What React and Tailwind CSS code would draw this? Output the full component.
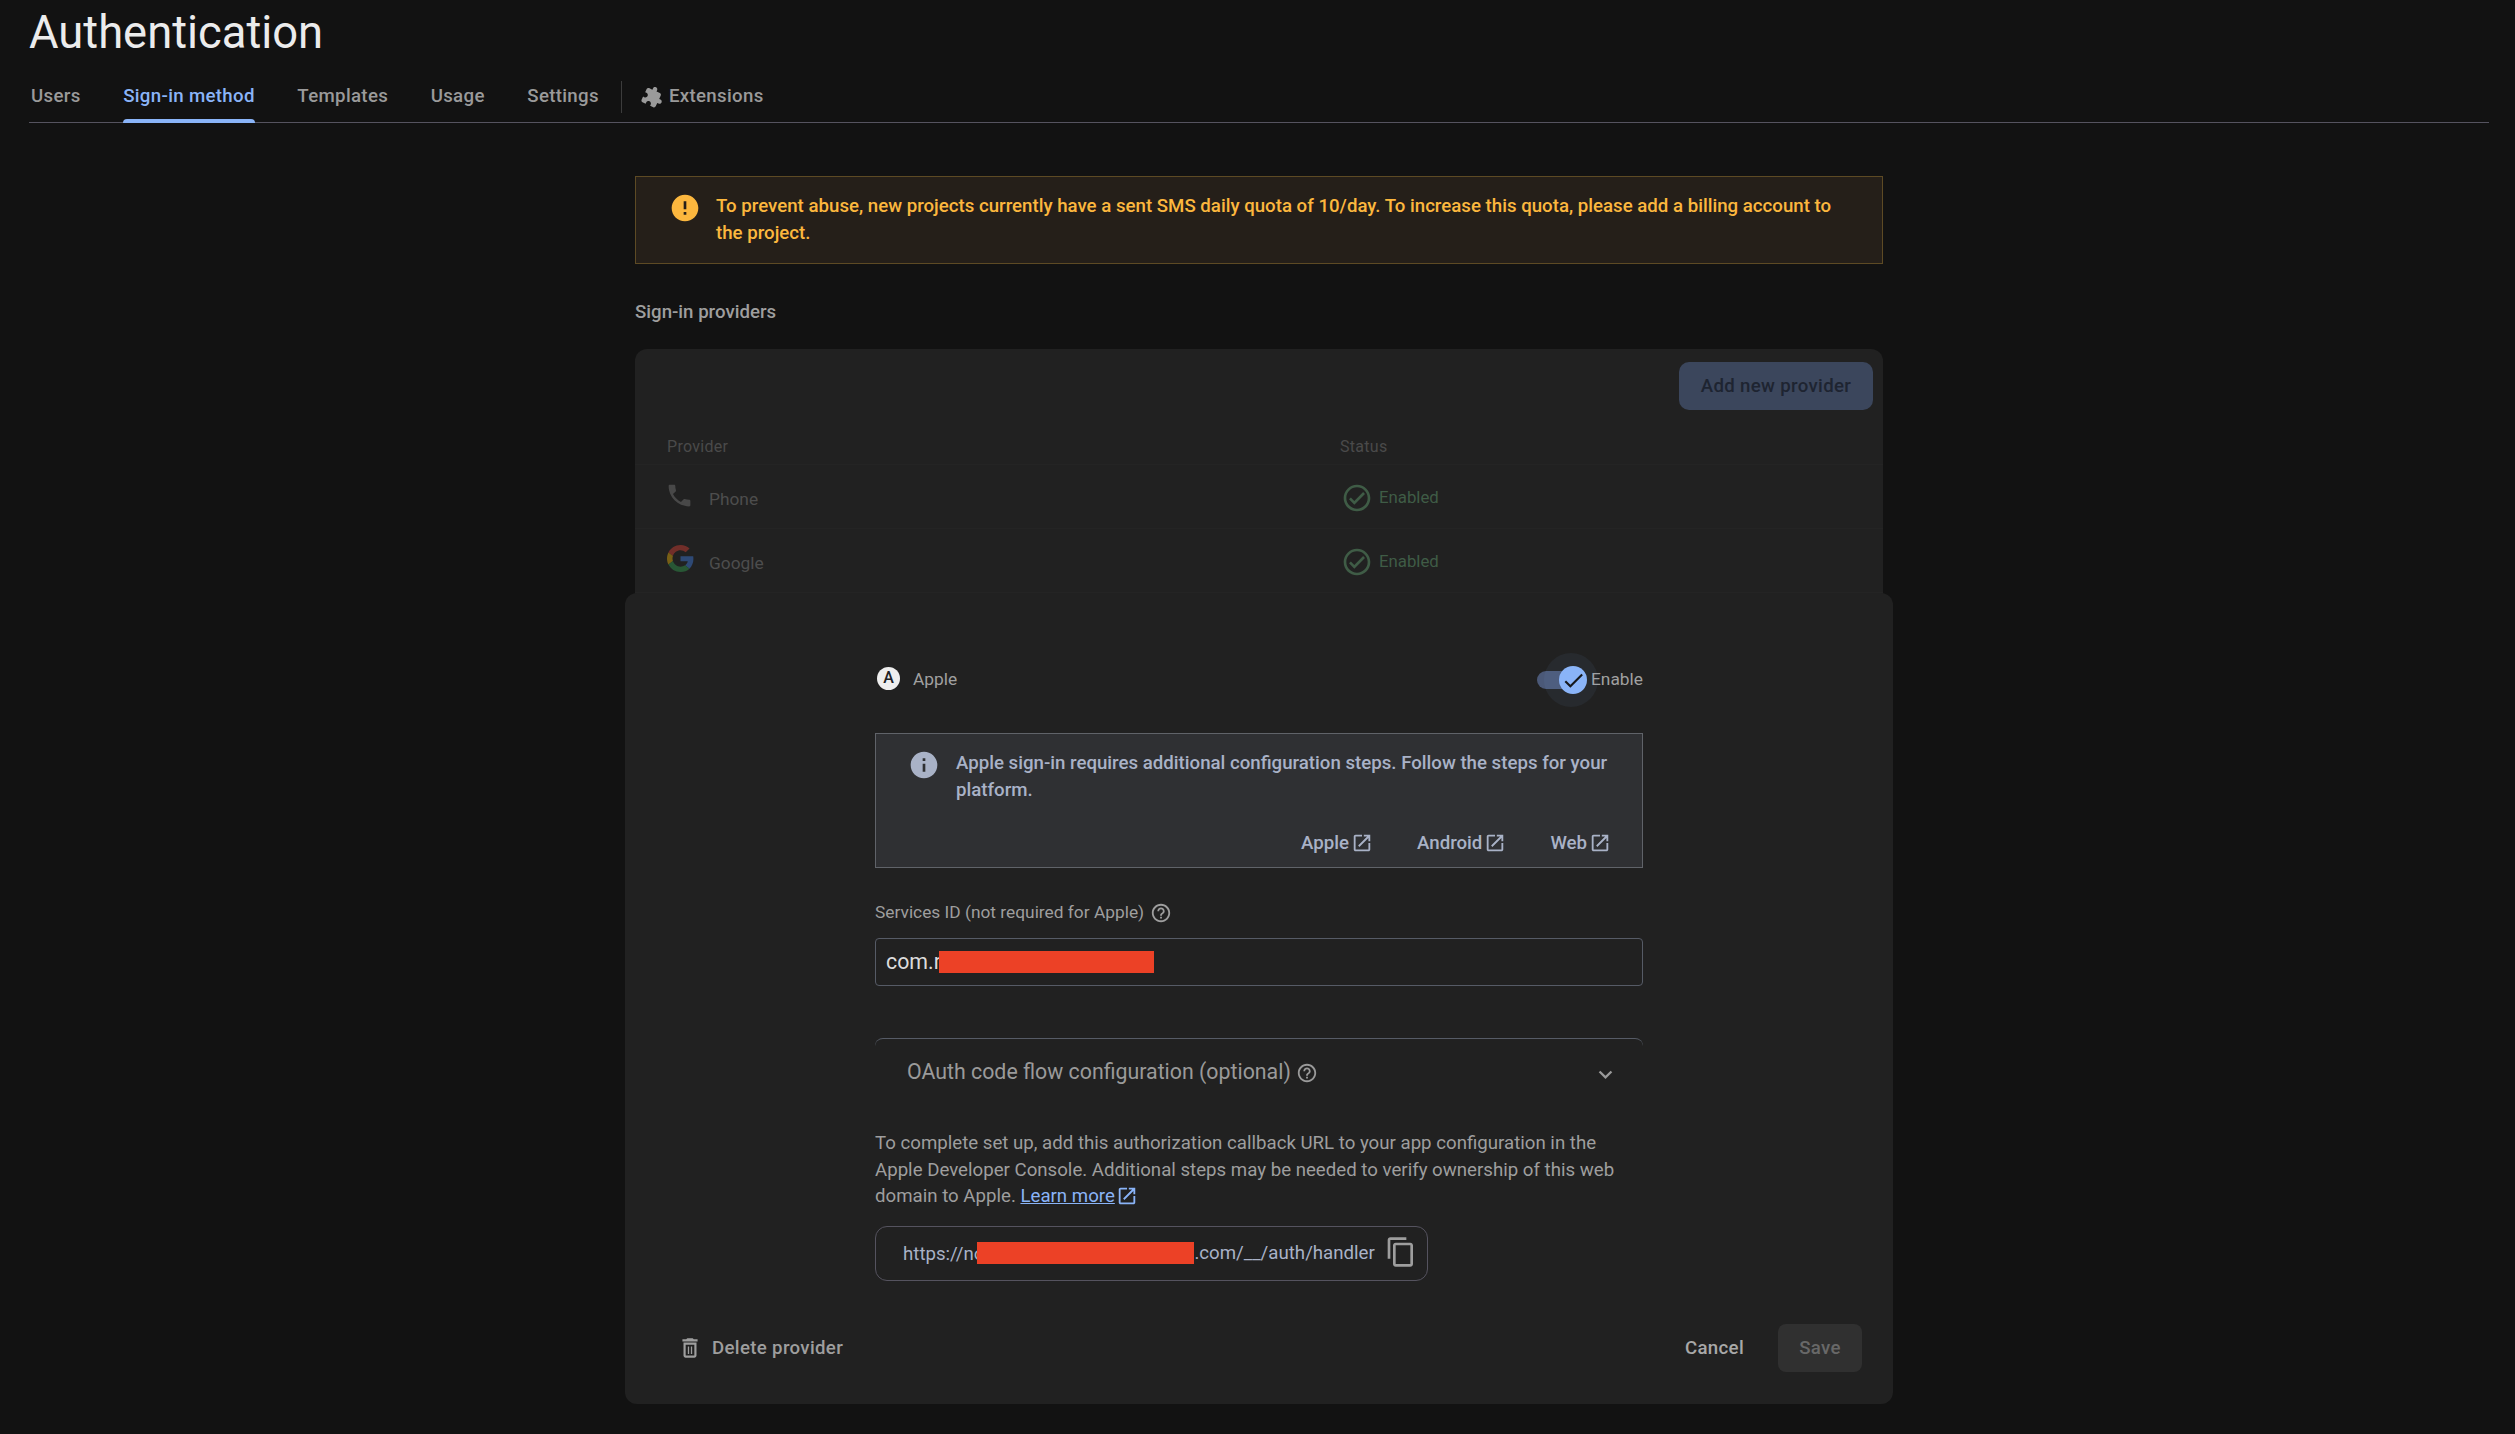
import React from 'react';

const Icon = ({ d, className, children }) => (
    <svg viewBox="0 0 24 24" fill="currentColor" className={className}>
        {d && <path d={d} />}
        {children}
    </svg>
);

const paths = {
    checkCircle: "M12 2C6.48 2 2 6.48 2 12s4.48 10 10 10 10-4.48 10-10S17.52 2 12 2zm0 18c-4.41 0-8-3.59-8-8s3.59-8 8-8 8 3.59 8 8-3.59 8-8 8zm4.59-12.42L10 14.17l-2.59-2.58L6 13l4 4 8-8z",
    phone: "M6.62 10.79c1.44 2.83 3.76 5.14 6.59 6.59l2.2-2.2c.27-.27.67-.36 1.02-.24 1.12.37 2.33.57 3.57.57.55 0 1 .45 1 1V20c0 .55-.45 1-1 1-9.39 0-17-7.61-17-17 0-.55.45-1 1-1h3.5c.55 0 1 .45 1 1 0 1.25.2 2.45.57 3.57.11.35.03.74-.25 1.02l-2.2 2.2z",
    openNew: "M19 19H5V5h7V3H5c-1.11 0-2 .9-2 2v14c0 1.1.89 2 2 2h14c1.1 0 2-.9 2-2v-7h-2v7zM14 3v2h3.59l-9.83 9.83 1.41 1.41L19 6.41V10h2V3h-7z",
    help: "M11 18h2v-2h-2v2zm1-16C6.48 2 2 6.48 2 12s4.48 10 10 10 10-4.48 10-10S17.52 2 12 2zm0 18c-4.41 0-8-3.59-8-8s3.59-8 8-8 8 3.59 8 8-3.59 8-8 8zm0-14c-2.21 0-4 1.79-4 4h2c0-1.1.9-2 2-2s2 .9 2 2c0 2-3 1.75-3 5h2c0-2.25 3-2.5 3-5 0-2.21-1.79-4-4-4z",
    copy: "M16 1H4c-1.1 0-2 .9-2 2v14h2V3h12V1zm3 4H8c-1.1 0-2 .9-2 2v14c0 1.1.9 2 2 2h11c1.1 0 2-.9 2-2V7c0-1.1-.9-2-2-2zm0 16H8V7h11v14z",
    expand: "M16.59 8.59L12 13.17 7.41 8.59 6 10l6 6 6-6z",
    info: "M12 2C6.48 2 2 6.48 2 12s4.48 10 10 10 10-4.48 10-10S17.52 2 12 2zm1 15h-2v-6h2v6zm0-8h-2V7h2v2z",
    error: "M12 2C6.48 2 2 6.48 2 12s4.48 10 10 10 10-4.48 10-10S17.52 2 12 2zm1 15h-2v-2h2v2zm0-4h-2V7h2v6z",
    trash: "M6 19c0 1.1.9 2 2 2h8c1.1 0 2-.9 2-2V7H6v12zM8 9h8v10H8V9zm7.5-5l-1-1h-5l-1 1H5v2h14V4h-3.5zM10 10.5h1.2v7H10zM12.8 10.5H14v7h-1.2z",
    check: "M9 16.17L4.83 12l-1.42 1.41L9 19 21 7l-1.41-1.41z",
    extension: "M20.5 11H19V7c0-1.1-.9-2-2-2h-4V3.5C13 2.12 11.88 1 10.5 1S8 2.12 8 3.5V5H4c-1.1 0-1.99.9-1.99 2v3.8H3.5c1.49 0 2.7 1.21 2.7 2.7s-1.21 2.7-2.7 2.7H2V20c0 1.1.9 2 2 2h3.8v-1.5c0-1.49 1.21-2.7 2.7-2.7 1.49 0 2.7 1.21 2.7 2.7V22H17c1.1 0 2-.9 2-2v-4h1.5c1.38 0 2.5-1.12 2.5-2.5S21.88 11 20.5 11z",
};

const GoogleLogo = () => (
    <svg viewBox="0 0 48 48" className="w-[27px] h-[27px] opacity-40 -mt-[3px]">
        <path fill="#EA4335" d="M24 9.5c3.54 0 6.71 1.22 9.21 3.6l6.85-6.85C35.9 2.38 30.47 0 24 0 14.62 0 6.51 5.38 2.56 13.22l7.98 6.19C12.43 13.72 17.74 9.5 24 9.5z" />
        <path fill="#4285F4" d="M46.98 24.55c0-1.57-.15-3.09-.38-4.55H24v9.02h12.94c-.58 2.96-2.26 5.48-4.78 7.18l7.73 6c4.51-4.18 7.09-10.36 7.09-17.65z" />
        <path fill="#FBBC05" d="M10.53 28.59c-.48-1.45-.76-2.99-.76-4.59s.27-3.14.76-4.59l-7.98-6.19C.92 16.46 0 20.12 0 24c0 3.88.92 7.54 2.56 10.78l7.97-6.19z" />
        <path fill="#34A853" d="M24 48c6.48 0 11.93-2.13 15.89-5.81l-7.73-6c-2.15 1.45-4.92 2.3-8.16 2.3-6.26 0-11.57-4.22-13.47-9.91l-7.98 6.19C6.51 42.62 14.62 48 24 48z" />
    </svg>
);

const tabs = ['Users', 'Sign-in method', 'Templates', 'Usage', 'Settings'];

const Tabs = () => (
    <div className="flex items-center h-[52px] mt-[18px] mr-[26px] pl-[2px] border-b border-[#55535f] text-[18.67px] tracking-[0.33px] font-medium text-[#9a9a9a]">
        <div className="flex gap-[42.5px] items-center h-full">
            {tabs.map(t => (
                <div key={t} className={t === 'Sign-in method' ? 'relative h-full flex items-center pb-[2px] text-[#8ab4f8]' : 'h-full flex items-center pb-[2px]'}>
                    {t}
                    {t === 'Sign-in method' && <div className="absolute left-0 right-0 -bottom-px h-1 rounded-t bg-[#8ab4f8]" />}
                </div>
            ))}
        </div>
        <div className="ml-[22px] mr-[20px] w-px h-8 bg-[#3c3c3c]" />
        <Icon d={paths.extension} className="w-[22px] h-[22px] rotate-[25deg] mr-[5px]" />
        <span className="pb-[2px]">Extensions</span>
    </div>
);

const Row = ({ icon, name }) => (
    <div className="grid grid-cols-[673px_1fr] h-[64px] px-8 border-b border-[#242424] items-center">
        <div className="flex items-center gap-[15px] text-[17.33px] text-[#4d4d4d]">
            {icon}
            <span className="pt-[6px]">{name}</span>
        </div>
        <div className="flex items-center gap-[8px] pl-[3px] pt-[2px] text-[16.8px] text-[#3f5c46]">
            <Icon d={paths.checkCircle} className="w-8 h-8 -mx-[2px]" />
            <span>Enabled</span>
        </div>
    </div>
);

const LinkOut = ({ label }) => (
    <div className="flex items-center gap-[2px]">
        {label}
        <Icon d={paths.openNew} className="w-[22px] h-[22px]" />
    </div>
);

const Toggle = () => (
    <div className="relative w-[54px] h-[54px]">
        <div className="absolute left-0 top-[18px] w-[40px] h-[18px] rounded-full bg-[#4b5978]" />
        <div className="absolute left-[7px] top-0 w-[54px] h-[54px] rounded-full bg-[#8ab4f8]/[0.06]" />
        <div className="absolute left-[22px] top-[13px] w-[28px] h-[28px] rounded-full bg-[#8ab4f8] flex items-center justify-center text-[#16181c]">
            <Icon d={paths.check} className="w-[25px] h-[25px]" />
        </div>
    </div>
);

const Redacted = ({ className }) => <span className={className} />;

const Modal = () => (
    <div className="absolute -left-[10px] top-[244px] w-[1268px] h-[811px] rounded-[12px] bg-[#212121] flex flex-col">
        <div className="ml-[250px] w-[768px] pt-[60px]">
            <div className="flex items-center justify-between h-[54px]">
                <div className="flex items-center gap-[13px] text-[17.33px] text-[#a0a0a0]">
                    <div className="ml-[2px] -mt-[3px] w-[23px] h-[23px] rounded-full bg-[#eeeeee] text-[#202124] text-[16px] font-medium flex items-center justify-center">A</div>
                    <span>Apple</span>
                </div>
                <div className="flex items-center text-[17.33px] text-[#a0a0a0]">
                    <Toggle />
                    <span>Enable</span>
                </div>
            </div>

            <div className="mt-[26px] h-[135px] border border-[#606369] bg-[#2f3033] text-[18.67px] font-medium text-[#a9b2c7]">
                <div className="flex pl-[35px] pr-[30px] pt-[16px] gap-[19px] leading-[26.67px]">
                    <Icon d={paths.info} className="shrink-0 w-[32px] h-[32px] -mx-[3px] mt-[-1px]" />
                    <div>Apple sign-in requires additional configuration steps. Follow the steps for your platform.</div>
                </div>
                <div className="flex justify-end gap-[44px] pr-[31px] mt-[28px] leading-[24px]">
                    <LinkOut label="Apple" />
                    <LinkOut label="Android" />
                    <LinkOut label="Web" />
                </div>
            </div>

            <div className="mt-[35px] h-5 flex items-center gap-[6px] text-[17.33px] text-[#9e9e9e]">
                <span>Services ID (not required for Apple)</span>
                <Icon d={paths.help} className="w-[22px] h-[22px]" />
            </div>
            <div className="mt-[15px] h-[48px] border border-[#565b66] rounded-[4px] flex items-center pl-[10px] text-[21.33px] text-[#dcdcdc]">
                <span>com.r</span>
                <Redacted className="-ml-[2px] w-[215px] h-[22px] bg-[#ec4126]" />
            </div>

            <div className="mt-[52px] h-[66px] border-t border-[#565b66] rounded-t-[8px] flex items-center pl-[32px] pr-[24px] text-[21.33px] text-[#9a9a9a]">
                <span>OAuth code flow configuration (optional)</span>
                <Icon d={paths.help} className="ml-[5px] mt-[2px] w-[22px] h-[22px]" />
                <Icon d={paths.expand} className="ml-auto mt-[6px] w-[27px] h-[27px]" />
            </div>

            <p className="mt-[26px] text-[18.67px] leading-[26.67px] text-[#9e9e9e]">
                To complete set up, add this authorization callback URL to your app configuration in the Apple Developer Console. Additional steps may be needed to verify ownership of this web domain to Apple.{' '}
                <span className="text-[#8ab4f8] underline">Learn more</span>
                <Icon d={paths.openNew} className="inline-block w-[22px] h-[22px] ml-[1px] text-[#8ab4f8] align-[-5px]" />
            </p>

            <div className="mt-[16px] w-[553px] h-[55px] border border-[#55535f] rounded-[12px] flex items-center pl-[27px] text-[18.67px] text-[#a9b2c7]">
                <span>https://no</span>
                <Redacted className="-ml-[7px] w-[217px] h-[22px] -mt-[1px] bg-[#ec4126]" />
                <span className="-mt-[1px]">.com/__/auth/handler</span>
                <Icon d={paths.copy} className="ml-[10px] -mt-[3px] w-[32px] h-[32px] text-[#9e9e9e]" />
            </div>
        </div>

        <div className="mt-auto flex items-center pl-[52px] pr-[31px] pb-[32px] text-[18.67px] tracking-[0.33px] font-medium text-[#9e9e9e]">
            <Icon d={paths.trash} className="w-[26px] h-[26px]" />
            <span className="ml-[9px]">Delete provider</span>
            <span className="ml-auto text-[#a8a8a8]">Cancel</span>
            <div className="ml-[34px] w-[84px] h-[48px] rounded-[8px] bg-[#303030] text-[#686868] flex items-center justify-center">Save</div>
        </div>
    </div>
);

export default function App() {
    return (
        <div className="relative h-[1434px] overflow-hidden bg-[#121212] font-['Roboto',sans-serif]">
            <div className="pl-[29px]">
                <h1 className="pt-[7px] h-[53px] text-[45.33px] leading-[52px] font-normal text-[#ececec]">Authentication</h1>
                <Tabs />
            </div>

            <div className="ml-[635px] w-[1248px]">
                <div className="mt-[53px] h-[88px] border border-[#5d4a24] bg-[#251f19] flex pl-[35px] pr-[40px] pt-[16px] gap-[17px] text-[18.67px] leading-[26.67px] font-medium text-[#fcb73e]">
                    <Icon d={paths.error} className="shrink-0 w-[32px] h-[32px] -mx-[2px] mt-[-1px]" />
                    <div>To prevent abuse, new projects currently have a sent SMS daily quota of 10/day. To increase this quota, please add a billing account to the project.</div>
                </div>

                <div className="mt-[36px] h-[24px] leading-[24px] text-[18.67px] font-medium text-[#9e9e9e]">Sign-in providers</div>

                <div className="relative mt-[25px] h-[300px] rounded-t-[12px] bg-[#212121]">
                    <div className="flex justify-end pt-[13px] pr-[10px]">
                        <div className="w-[194px] h-[48px] rounded-[10px] bg-[#3b465c] text-[18.67px] tracking-[0.33px] font-medium text-[#1e2431] flex items-center justify-center">Add new provider</div>
                    </div>
                    <div className="grid grid-cols-[673px_1fr] h-[55px] px-8 border-b border-[#242424] items-center text-[16px] tracking-[0.3px] text-[#4a4a4a]">
                        <span className="pt-[20px]">Provider</span>
                        <span className="pt-[20px]">Status</span>
                    </div>
                    <Row name="Phone" icon={<Icon d={paths.phone} className="w-[29px] h-[29px] -ml-[2px] -mt-[2px] text-[#484848]" />} />
                    <Row name="Google" icon={<GoogleLogo />} />
                    <Modal />
                </div>
            </div>
        </div>
    );
}
